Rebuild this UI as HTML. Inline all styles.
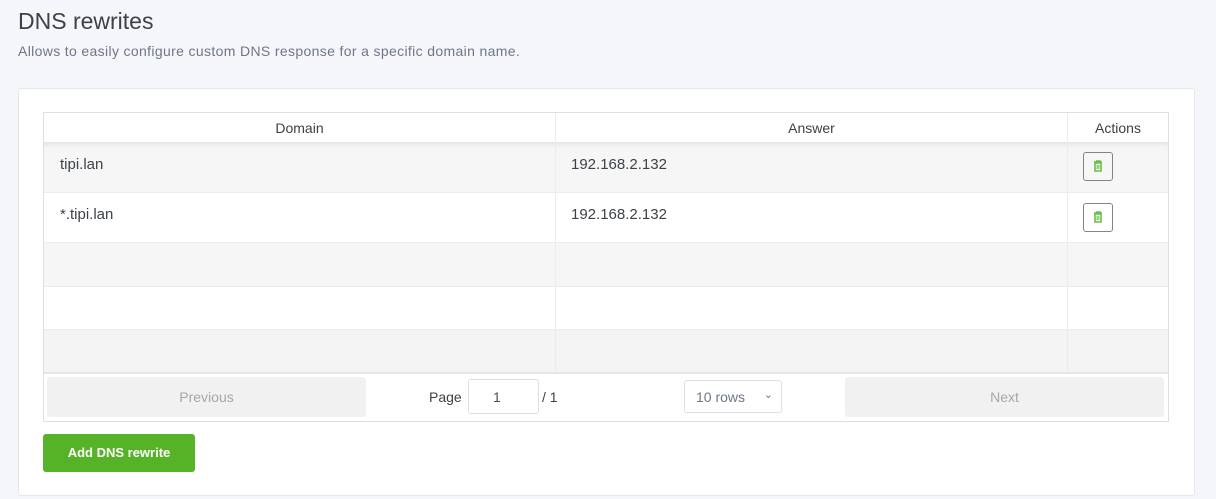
<!DOCTYPE html>
<html><head><style>
*{box-sizing:border-box;margin:0;padding:0}
body{width:1216px;height:499px;background:#f4f6fa;font-family:"Liberation Sans",sans-serif;position:relative;overflow:hidden;color:#495057}
.a{position:absolute}
h1{position:absolute;left:18px;top:8px;font-size:23px;font-weight:400;color:#3c4248}
.sub{left:18px;top:43px;font-size:14px;letter-spacing:0.35px;color:#6e7687}
.card{left:18px;top:88px;width:1177px;height:408px;background:#fff;border:1px solid #e3e6ec;border-radius:3px}
.tbl{left:43px;top:112px;width:1126px;height:310px;border:1px solid #dcdfe3}
.row{position:absolute;left:0;width:1124px;border-bottom:1px solid #ececec}
.vl{position:absolute;top:0;width:1px;background:#ececec}
.t{position:absolute;font-size:15px;color:#3c4248}
.btn{position:absolute;left:1039px;width:30px;height:29px;border:1px solid #7d8591;border-radius:3px;background:transparent}
.pg{position:absolute;top:4px;height:40px;background:#f1f1f1;border-radius:3px;color:#a7a7a7;font-size:14px;text-align:center;line-height:40px}
</style></head><body>
<h1>DNS rewrites</h1>
<div class="a sub">Allows to easily configure custom DNS response for a specific domain name.</div>
<div class="a card"></div>
<div class="a tbl">
 <div class="row" style="top:0;height:29px;border-bottom:none"></div>
 <div class="row" style="top:29px;height:51px;background:#f6f6f6;box-shadow:inset 0 6px 8px -6px rgba(0,0,0,.15)"></div>
 <div class="row" style="top:80px;height:50px"></div>
 <div class="row" style="top:130px;height:44px;background:#f6f6f6"></div>
 <div class="row" style="top:174px;height:43px"></div>
 <div class="row" style="top:217px;height:44px;background:#f4f4f4;border-bottom:2px solid #e6e6e6"></div>
 <div class="vl" style="left:511px;height:261px"></div>
 <div class="vl" style="left:1023px;height:261px"></div>
 <div class="t" style="left:0;width:511px;text-align:center;top:7px;font-size:14px">Domain</div>
 <div class="t" style="left:512px;width:511px;text-align:center;top:7px;font-size:14px">Answer</div>
 <div class="t" style="left:1024px;width:100px;text-align:center;top:7px;font-size:14px">Actions</div>
 <div class="t" style="left:16px;top:43px">tipi.lan</div>
 <div class="t" style="left:527px;top:43px">192.168.2.132</div>
 <div class="t" style="left:16px;top:93px">*.tipi.lan</div>
 <div class="t" style="left:527px;top:93px">192.168.2.132</div>
 <div class="btn" style="top:39px"><svg width="28" height="27" viewBox="0 0 28 27"><path d="M10 9h8M12 8h4v1M11 10h6v8h-6z" fill="none" stroke="#66c24a" stroke-width="1.6"/><rect x="12.5" y="12" width="3" height="4" fill="#8fd676"/></svg></div>
 <div class="btn" style="top:90px"><svg width="28" height="27" viewBox="0 0 28 27"><path d="M10 9h8M12 8h4v1M11 10h6v8h-6z" fill="none" stroke="#66c24a" stroke-width="1.6"/><rect x="12.5" y="12" width="3" height="4" fill="#8fd676"/></svg></div>
 <div class="pg" style="left:3px;top:264px;width:319px">Previous</div>
 <div class="pg" style="left:801px;top:264px;width:319px">Next</div>
 <div class="t" style="left:385px;top:276px;font-size:14px">Page</div>
 <div class="a" style="left:424px;top:266px;width:71px;height:35px;border:1px solid #dcdfe3;border-radius:3px;font-size:14px;color:#495057;padding:9px 0 0 24px">1</div>
 <div class="t" style="left:498px;top:276px;font-size:14px">/ 1</div>
 <div class="a" style="left:640px;top:267px;width:98px;height:33px;border:1px solid #dcdfe3;border-radius:3px;font-size:14px;color:#6e7687;padding:8px 0 0 11px">10 rows<span style="position:absolute;right:8px;top:7px;font-size:11px">&#8964;</span></div>
</div>
<div class="a" style="left:43px;top:434px;width:152px;height:38px;background:#56b227;border-radius:3px;color:#fff;font-size:13px;font-weight:700;text-align:center;line-height:38px">Add DNS rewrite</div>
</body></html>
